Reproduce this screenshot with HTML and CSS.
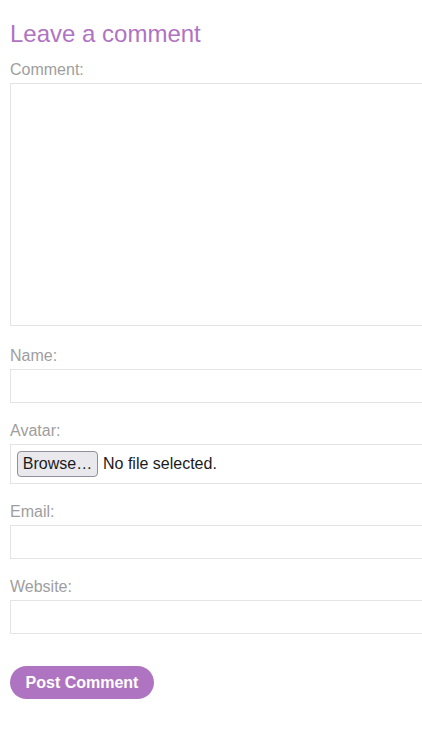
FILE: index.html
```html
<!DOCTYPE html>
<html lang="en">
<head>
<meta charset="utf-8">
<title>Leave a comment</title>
<link rel="stylesheet" href="styles.css">
</head>
<body>
<section class="comment-form">
  <h1 class="title">Leave a comment</h1>
  <form class="form">
    <label class="label" for="comment">Comment:</label>
    <textarea class="field field-area" id="comment"></textarea>
    <label class="label" for="name">Name:</label>
    <input class="field field-text" id="name" type="text">
    <label class="label" for="avatar">Avatar:</label>
    <div class="field field-file" id="avatar">
      <span class="browse">Browse…</span>
      <span class="file-status">No file selected.</span>
    </div>
    <label class="label" for="email">Email:</label>
    <input class="field field-text" id="email" type="text">
    <label class="label" for="website">Website:</label>
    <input class="field field-text field-last" id="website" type="text">
    <button class="submit" type="button">Post Comment</button>
  </form>
</section>
</body>
</html>
```
FILE: styles.css
```css
html, body {
  margin: 0;
  padding: 0;
  overflow-x: hidden;
  background: #ffffff;
}

body {
  font-family: "Liberation Sans", Arial, sans-serif;
  font-size: 16px;
}

.comment-form {
  padding: 20px 0 0 10px;
}

.title {
  margin: 0 0 13px;
  font-size: 24px;
  line-height: 28px;
  font-weight: normal;
  color: #b073c2;
}

.form {
  display: flex;
  flex-direction: column;
  align-items: flex-start;
}

.label {
  display: block;
  font-size: 16px;
  line-height: 18px;
  color: #9e9e9e;
  margin-bottom: 4px;
}

.field {
  box-sizing: border-box;
  width: calc(100% + 20px);
  border: 1px solid #e4e4e4;
  background: #ffffff;
  margin: 0 0 19px;
  padding: 0;
  font: inherit;
  outline: none;
}

.field-area {
  height: 243px;
  resize: none;
  margin-bottom: 21px;
}

.field-text {
  height: 34px;
}

.field-file {
  height: 40px;
  display: flex;
  align-items: center;
  padding: 0 6px;
  gap: 5px;
}

.browse {
  box-sizing: border-box;
  height: 26px;
  width: 81px;
  display: flex;
  align-items: center;
  justify-content: center;
  background: #e9e9ed;
  border: 1px solid #8f8f9d;
  border-radius: 4px;
  color: #1b1b1b;
  font-size: 16px;
}

.file-status {
  color: #1b1b1b;
  font-size: 16px;
}

.field-last {
  margin-bottom: 32px;
}

.submit {
  height: 33px;
  width: 144px;
  border: none;
  border-radius: 17px;
  background: #af74c1;
  color: #ffffff;
  font-family: "Liberation Sans", Arial, sans-serif;
  font-size: 16px;
  font-weight: bold;
  padding: 0;
  cursor: pointer;
}
```
